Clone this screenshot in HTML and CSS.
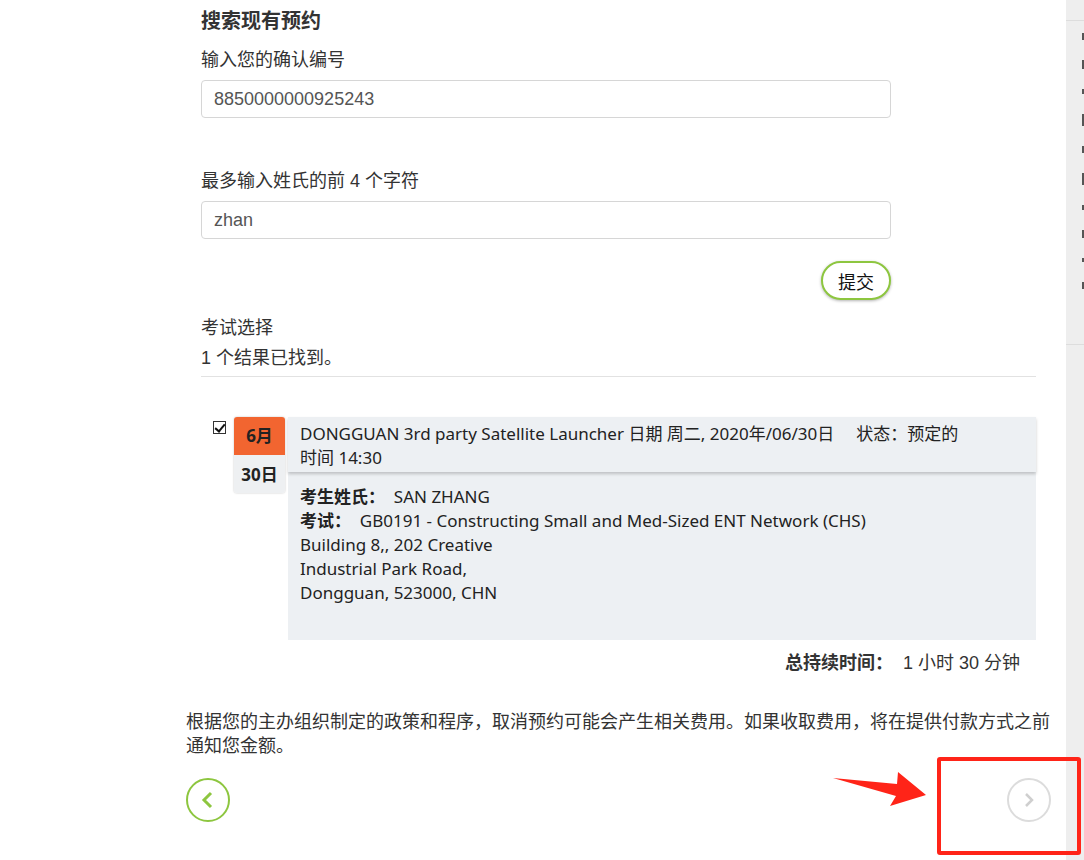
FILE: index.html
```html
<!DOCTYPE html>
<html lang="zh-CN">
<head>
    <meta charset="UTF-8">
    <meta name="viewport" content="width=device-width, initial-scale=1.0">
    <title>搜索现有预约</title>
    <link rel="stylesheet" href="styles.css">
</head>
<body>
    <div class="layout">
        <div class="main">
            <form class="search-form" id="searchForm">
                <h2 class="title">搜索现有预约</h2>

                <div class="form-group first">
                    <label for="confirm">输入您的确认编号</label>
                    <input type="text" id="confirm" value="8850000000925243">
                </div>

                <div class="form-group">
                    <label for="lastname">最多输入姓氏的前 4 个字符</label>
                    <input type="text" id="lastname" value="zhan">
                </div>

                <div class="actions">
                    <button type="submit" class="btn-submit">提交</button>
                </div>
            </form>

            <div class="results">
                <div class="results-title">考试选择</div>
                <div class="results-count">1 个结果已找到。</div>
                <div class="divider"></div>

                <div class="exam-row">
                    <input type="checkbox" class="exam-check" checked>
                    <div class="date-badge">
                        <div class="date-month">6月</div>
                        <div class="date-day">30日</div>
                    </div>
                    <div class="exam-card">
                        <div class="exam-head">
                            DONGGUAN 3rd party Satellite Launcher 日期 周二, 2020年/06/30日&nbsp;&nbsp;&nbsp;&nbsp; 状态：预定的<br>
                            时间 14:30
                        </div>
                        <div class="exam-body">
                            <div><b>考生姓氏：</b>&nbsp; SAN ZHANG</div>
                            <div><b>考试：</b>&nbsp; GB0191 - Constructing Small and Med-Sized ENT Network (CHS)</div>
                            <div>Building 8,, 202 Creative</div>
                            <div>Industrial Park Road,</div>
                            <div>Dongguan, 523000, CHN</div>
                        </div>
                    </div>
                </div>

                <div class="duration"><b>总持续时间：</b>&nbsp; 1 小时 30 分钟</div>
            </div>

            <p class="notice">根据您的主办组织制定的政策和程序，取消预约可能会产生相关费用。如果收取费用，将在提供付款方式之前通知您金额。</p>

            <div class="nav">
                <button class="nav-btn back" type="button" aria-label="上一步">
                    <svg width="16" height="18" viewBox="0 0 16 18"><polyline points="11,2 4,9 11,16" fill="none" stroke="#8dc63f" stroke-width="3"/></svg>
                </button>
                <button class="nav-btn next" type="button" aria-label="下一步" disabled>
                    <svg width="16" height="18" viewBox="0 0 16 18"><polyline points="5,3 11,9 5,15" fill="none" stroke="#cfcfcf" stroke-width="2.5"/></svg>
                </button>
            </div>

            <!-- screenshot annotation -->
            <svg class="mark-arrow" width="100" height="40" viewBox="0 0 100 40">
                <polygon points="0,6 64,12 65,0 93,23 57,34 63,24" fill="#ff2418"/>
            </svg>
            <div class="mark-box"></div>
        </div>

        <aside class="side">
            <div class="side-top"></div>
            <div class="side-list">
                <span class="frag" style="height: 7px"></span>
                <span class="frag" style="height: 9px"></span>
                <span class="frag" style="height: 5px"></span>
                <span class="frag" style="height: 12px"></span>
                <span class="frag" style="height: 7px"></span>
                <span class="frag" style="height: 12px"></span>
                <span class="frag" style="height: 5px"></span>
                <span class="frag" style="height: 8px"></span>
                <span class="frag" style="height: 4px"></span>
                <span class="frag" style="height: 7px"></span>
            </div>
        </aside>
    </div>
</body>
</html>
```

FILE: styles.css
```css
html, body {
    height: 860px;
    overflow: hidden;
}
body {
    margin: 0;
    font-family: "Liberation Sans", "Noto Sans CJK SC", sans-serif;
    font-size: 18px;
    color: #333;
    background: #fff;
}
.layout {
    display: flex;
    height: 860px;
}
.main {
    position: relative;
    width: 865px;
    margin-left: 186px;
}
.search-form {
    width: 690px;
    padding: 0 15px;
}
.title {
    margin: 6px 0 0;
    font-size: 20px;
    line-height: 28px;
    font-family: "Noto Sans CJK SC", sans-serif;
    font-weight: bold;
}
.form-group {
    margin-top: 14px;
}
.form-group + .form-group {
    margin-top: 51px;
}
label {
    display: block;
    line-height: 24px;
    margin-bottom: 8px;
}
input[type="text"] {
    box-sizing: border-box;
    width: 100%;
    height: 38px;
    padding: 0 12px;
    border: 1px solid #d6d6d6;
    border-radius: 4px;
    font-family: "Liberation Sans", sans-serif;
    font-size: 18px;
    color: #555;
}
.actions {
    display: flex;
    justify-content: flex-end;
    margin-top: 22px;
}
.btn-submit {
    height: 39px;
    width: 70px;
    background: #fff;
    border: 2px solid #8dc63f;
    border-radius: 20px;
    box-shadow: 0 1px 3px rgba(0, 0, 0, 0.3);
    font-family: "Noto Sans CJK SC", sans-serif;
    font-size: 18px;
    color: #111;
    cursor: pointer;
}
.results {
    padding: 0 15px;
    margin-top: 13px;
}
.results-title,
.results-count {
    line-height: 30px;
}
.divider {
    margin-top: 3px;
    border-top: 1px solid #e2e2e2;
}
.exam-row {
    display: flex;
    align-items: flex-start;
    margin-top: 40px;
}
.exam-check {
    appearance: none;
    -webkit-appearance: none;
    position: relative;
    box-sizing: border-box;
    width: 13px;
    height: 13px;
    margin: 4px 8px 0 12px;
    border: 1px solid #333;
    background: #fff;
}
.exam-check:checked::after {
    content: "";
    position: absolute;
    left: 3px;
    top: 0;
    width: 4px;
    height: 8px;
    border: solid #111;
    border-width: 0 2px 2px 0;
    transform: rotate(40deg);
}
.date-badge {
    width: 51px;
    text-align: center;
    font-family: "Noto Sans", "Noto Sans CJK SC", sans-serif;
    font-weight: bold;
    font-size: 17px;
    color: #222;
    border-radius: 3px;
    box-shadow: 0 0 2px rgba(0, 0, 0, 0.25);
    overflow: hidden;
}
.date-month {
    background: #f26530;
    height: 38px;
    line-height: 38px;
}
.date-day {
    background: #eef0f2;
    height: 38px;
    line-height: 40px;
}
.exam-card {
    flex: 1;
    margin-left: 3px;
    background: #edf0f3;
    font-family: "Noto Sans", "Noto Sans CJK SC", sans-serif;
    font-size: 17px;
    line-height: 24px;
    color: #222;
}
.exam-head {
    padding: 5px 12px 2px;
    height: 48px;
    box-shadow: 0 2px 3px rgba(0, 0, 0, 0.2);
    position: relative;
}
.exam-body {
    padding: 13px 12px 35px;
}
.duration {
    text-align: right;
    padding-right: 16px;
    margin-top: 11px;
    line-height: 24px;
}
.notice {
    margin: 35px 0 0;
    line-height: 24px;
    color: #333;
}
.nav {
    display: flex;
    justify-content: space-between;
    margin-top: 20px;
}
.nav-btn {
    width: 44px;
    height: 44px;
    border-radius: 50%;
    background: #fff;
    display: flex;
    align-items: center;
    justify-content: center;
    padding: 0;
    cursor: pointer;
}
.nav-btn.back {
    border: 2px solid #8dc63f;
}
.nav-btn.next {
    border: 2px solid #dcdcdc;
    cursor: default;
}
.mark-arrow {
    position: absolute;
    left: 647px;
    top: 772px;
}
.mark-box {
    position: absolute;
    left: 751px;
    top: 757px;
    width: 136px;
    height: 90px;
    border: 4px solid #ff2418;
    border-radius: 3px;
}
.side {
    margin-left: 15px;
    flex: 1;
    background: #eee;
    overflow: hidden;
}
.side-top {
    height: 20px;
    border-bottom: 1px solid #ddd;
}
.side-list {
    height: 324px;
    box-sizing: border-box;
    padding: 12px 0 0 16px;
    border-bottom: 1px solid #ddd;
    display: flex;
    flex-direction: column;
    gap: 20px;
}
.frag {
    display: block;
    width: 2px;
    background: #555;
}
```
